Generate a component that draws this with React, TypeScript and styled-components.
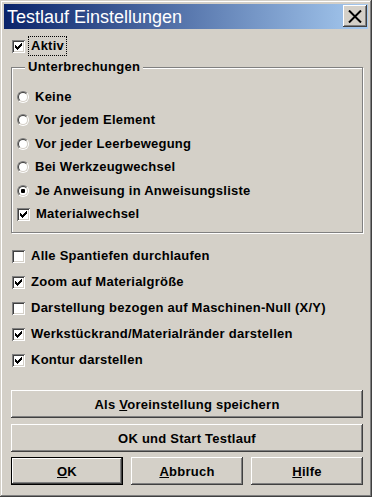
import React from "react";
import styled, { createGlobalStyle } from "styled-components";

const face = "#d4d0c8";
const shadow = "#808080";
const darkShadow = "#404040";

const GlobalStyle = createGlobalStyle`
  html, body {
    margin: 0;
    padding: 0;
    background: ${face};
  }
  body {
    font-family: "Liberation Sans", Arial, sans-serif;
  }
`;

const Window = styled.div`
  width: 372px;
  height: 497px;
  box-sizing: border-box;
  padding: 4px;
  display: flex;
  flex-direction: column;
  background: ${face};
  box-shadow: inset -1px -1px ${darkShadow}, inset 1px 1px ${face},
    inset -2px -2px ${shadow}, inset 2px 2px #fff;
`;

const TitleBar = styled.div`
  height: 25px;
  display: flex;
  align-items: center;
  justify-content: space-between;
  padding-left: 3px;
  background: linear-gradient(to right, #0a246a, #a6caf0);
`;

const TitleText = styled.span`
  color: #fff;
  font-family: "Liberation Sans", Arial, sans-serif;
  font-size: 18px;
  line-height: 22px;
`;

const CloseButton = styled.button`
  width: 24px;
  height: 22px;
  margin: 0 1px 1px 0;
  padding: 0;
  display: flex;
  align-items: center;
  justify-content: center;
  border: none;
  background: ${face};
  box-shadow: inset -1px -1px ${darkShadow}, inset 1px 1px #fff,
    inset -2px -2px ${shadow};
`;

const Content = styled.div`
  flex: 1;
  display: flex;
  flex-direction: column;
  padding: 7px 5px 0 7px;
  font-size: 13px;
  font-weight: bold;
  letter-spacing: 0.25px;
  color: #000;
`;

const OptionRow = styled.label<{ $height: number; $indent: number }>`
  display: flex;
  align-items: center;
  gap: 6px;
  height: ${(p) => p.$height}px;
  padding-left: ${(p) => p.$indent}px;
  line-height: 16px;
  white-space: nowrap;
`;

const FocusLabel = styled.span`
  padding: 1px 2px;
  margin-left: -3px;
  border: 1px dotted #000;
`;

const CheckBox = styled.span`
  width: 13px;
  height: 13px;
  flex: none;
  background: #fff;
  box-shadow: inset 1px 1px ${shadow}, inset -1px -1px #fff,
    inset 2px 2px ${darkShadow}, inset -2px -2px ${face};
  svg {
    display: block;
  }
`;

const RadioOuter = styled.span`
  width: 12px;
  height: 12px;
  flex: none;
  box-sizing: border-box;
  border-radius: 50%;
  border: 1px solid;
  border-color: ${shadow} #fff #fff ${shadow};
  display: flex;
`;

const RadioInner = styled.span`
  flex: 1;
  border-radius: 50%;
  border: 1px solid;
  border-color: ${darkShadow} ${face} ${face} ${darkShadow};
  background: #fff;
  display: flex;
  align-items: center;
  justify-content: center;
`;

const RadioDot = styled.span`
  width: 4px;
  height: 4px;
  border-radius: 1px;
  background: #000;
`;

const Group = styled.fieldset`
  margin: 3px 0 0;
  padding: 10px 0 6px 5px;
  min-width: 0;
  border: 1px solid ${shadow};
  box-shadow: inset 1px 1px #fff, 1px 1px #fff;
`;

const GroupTitle = styled.legend`
  margin-left: 8px;
  padding: 0 3px;
  line-height: 16px;
  background: ${face};
`;

const CheckList = styled.div`
  display: flex;
  flex-direction: column;
  margin-top: 10px;
`;

const ButtonStack = styled.div`
  display: flex;
  flex-direction: column;
  gap: 6px;
  margin-top: 17px;
`;

const ButtonRow = styled.div`
  display: grid;
  grid-template-columns: repeat(3, 1fr);
  gap: 8px;
  margin-top: -1px;
`;

const PushButton = styled.button<{ $default?: boolean }>`
  height: 28px;
  box-sizing: border-box;
  padding: 0;
  font: inherit;
  letter-spacing: inherit;
  color: #000;
  background: ${face};
  border: ${(p) => (p.$default ? "1px solid #000" : "none")};
  box-shadow: inset -1px -1px ${darkShadow}, inset 1px 1px #fff,
    inset -2px -2px ${shadow};
`;

const Check = () => (
  <svg width="13" height="13" shapeRendering="crispEdges">
    <rect x="3" y="5" width="1" height="3" />
    <rect x="4" y="6" width="1" height="3" />
    <rect x="5" y="7" width="1" height="3" />
    <rect x="6" y="6" width="1" height="3" />
    <rect x="7" y="5" width="1" height="3" />
    <rect x="8" y="4" width="1" height="3" />
    <rect x="9" y="3" width="1" height="3" />
  </svg>
);

const Box = ({ checked }: { checked: boolean }) => (
  <CheckBox>{checked && <Check />}</CheckBox>
);

const Radio = ({ checked }: { checked: boolean }) => (
  <RadioOuter>
    <RadioInner>{checked && <RadioDot />}</RadioInner>
  </RadioOuter>
);

const interruptions = [
  { label: "Keine", checked: false },
  { label: "Vor jedem Element", checked: false },
  { label: "Vor jeder Leerbewegung", checked: false },
  { label: "Bei Werkzeugwechsel", checked: false },
  { label: "Je Anweisung in Anweisungsliste", checked: true },
];

const options = [
  { label: "Alle Spantiefen durchlaufen", checked: false },
  { label: "Zoom auf Materialgröße", checked: true },
  { label: "Darstellung bezogen auf Maschinen-Null (X/Y)", checked: false },
  { label: "Werkstückrand/Materialränder darstellen", checked: true },
  { label: "Kontur darstellen", checked: true },
];

const App = () => {
  return (
    <>
      <GlobalStyle />
      <Window>
        <TitleBar>
          <TitleText>Testlauf Einstellungen</TitleText>
          <CloseButton>
            <svg width="14" height="13" viewBox="0 0 14 13">
              <path d="M1 0.5 L13 12.5 M13 0.5 L1 12.5" stroke="#000" strokeWidth="2" />
            </svg>
          </CloseButton>
        </TitleBar>
        <Content>
          <OptionRow $height={20} $indent={1}>
            <Box checked />
            <FocusLabel>Aktiv</FocusLabel>
          </OptionRow>

          <Group>
            <GroupTitle>Unterbrechungen</GroupTitle>
            {interruptions.map((item) => (
              <OptionRow key={item.label} $height={23.5} $indent={0}>
                <Radio checked={item.checked} />
                {item.label}
              </OptionRow>
            ))}
            <OptionRow $height={23.5} $indent={0}>
              <Box checked />
              Materialwechsel
            </OptionRow>
          </Group>

          <CheckList>
            {options.map((item) => (
              <OptionRow key={item.label} $height={26} $indent={1}>
                <Box checked={item.checked} />
                {item.label}
              </OptionRow>
            ))}
          </CheckList>

          <ButtonStack>
            <PushButton>
              Als <u>V</u>oreinstellung speichern
            </PushButton>
            <PushButton>OK und Start Testlauf</PushButton>
            <ButtonRow>
              <PushButton $default>
                <u>O</u>K
              </PushButton>
              <PushButton>
                <u>A</u>bbruch
              </PushButton>
              <PushButton>
                <u>H</u>ilfe
              </PushButton>
            </ButtonRow>
          </ButtonStack>
        </Content>
      </Window>
    </>
  );
};

export default App;
